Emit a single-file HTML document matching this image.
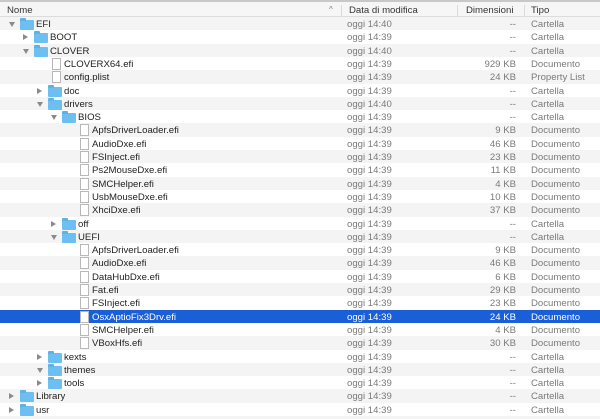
<!DOCTYPE html>
<html><head><style>
*{margin:0;padding:0;box-sizing:border-box}
body{width:600px;height:419px;overflow:hidden;background:#f4f4f4;font-family:"Liberation Sans",Arial,sans-serif;font-size:9.6px;color:#222;position:relative}
.hd{position:absolute;left:0;top:0;width:600px;height:17px;background:#f6f6f6;border-top:2px solid #c8c8c8;border-bottom:1px solid #dcdcdc}
.hd span{position:absolute;top:3px;color:#333}
.dv{position:absolute;top:3px;width:1px;height:11px;background:#dadada}
.r{position:absolute;left:0;width:600px;height:13.25px}
.r.w{background:#fff}.r.g{background:#f4f4f4}
.r.s{background:#1a5ed8;color:#fff}
.r.s .d,.r.s .z,.r.s .t{color:#fff}
.r>span{position:absolute;top:2px;white-space:nowrap;line-height:12px}
.r>div{position:absolute}
.d{left:347px;color:#7a7a7a}
.z{right:84px;color:#7a7a7a;text-align:right}
.t{left:531px;color:#7a7a7a}
.tri{top:4px;width:0;height:0}
.tr{border-left:5px solid #8a8a8a;border-top:3px solid transparent;border-bottom:3px solid transparent}
.td{border-top:5px solid #8a8a8a;border-left:3px solid transparent;border-right:3px solid transparent;top:5px}
.fo{top:3px;width:14px;height:10px;background:#6cbff0;border-radius:1px}
.fo:before{content:"";position:absolute;left:0;top:-2px;width:6px;height:3px;background:#5fb2e6;border-radius:1px 1px 0 0}
.fi{top:1px;width:9px;height:12px;background:#fff;border:1px solid #b8b8b8}
</style></head><body>
<div class="hd"><span style="left:7px">Nome</span><span style="left:329px;color:#777;font-size:8px;top:3px">^</span><div class="dv" style="left:341px"></div><span style="left:349px">Data di modifica</span><div class="dv" style="left:457px"></div><span style="left:466px">Dimensioni</span><div class="dv" style="left:524px"></div><span style="left:531px">Tipo</span></div>
<div id="rows"></div>
<script>
var R=[["EFI",0,"D","14:40","--","Cartella"],["BOOT",1,"R","14:39","--","Cartella"],["CLOVER",1,"D","14:40","--","Cartella"],["CLOVERX64.efi",2,"F","14:39","929 KB","Documento"],["config.plist",2,"F","14:39","24 KB","Property List"],["doc",2,"R","14:39","--","Cartella"],["drivers",2,"D","14:40","--","Cartella"],["BIOS",3,"D","14:39","--","Cartella"],["ApfsDriverLoader.efi",4,"F","14:39","9 KB","Documento"],["AudioDxe.efi",4,"F","14:39","46 KB","Documento"],["FSInject.efi",4,"F","14:39","23 KB","Documento"],["Ps2MouseDxe.efi",4,"F","14:39","11 KB","Documento"],["SMCHelper.efi",4,"F","14:39","4 KB","Documento"],["UsbMouseDxe.efi",4,"F","14:39","10 KB","Documento"],["XhciDxe.efi",4,"F","14:39","37 KB","Documento"],["off",3,"R","14:39","--","Cartella"],["UEFI",3,"D","14:39","--","Cartella"],["ApfsDriverLoader.efi",4,"F","14:39","9 KB","Documento"],["AudioDxe.efi",4,"F","14:39","46 KB","Documento"],["DataHubDxe.efi",4,"F","14:39","6 KB","Documento"],["Fat.efi",4,"F","14:39","29 KB","Documento"],["FSInject.efi",4,"F","14:39","23 KB","Documento"],["OsxAptioFix3Drv.efi",4,"F","14:39","24 KB","Documento"],["SMCHelper.efi",4,"F","14:39","4 KB","Documento"],["VBoxHfs.efi",4,"F","14:39","30 KB","Documento"],["kexts",2,"R","14:39","--","Cartella"],["themes",2,"D","14:39","--","Cartella"],["tools",2,"R","14:39","--","Cartella"],["Library",0,"R","14:39","--","Cartella"],["usr",0,"R","14:39","--","Cartella"]];
var h="";
R.forEach(function(r,i){
 var c=i==22?"s":(i%2?"w":"g"),l=r[1],top=17+i*13.3;
 h+='<div class="r '+c+'" style="top:'+top+'px">';
 if(r[2]=="F"){h+='<div class="fi" style="left:'+(52+(l-2)*14)+'px"></div><span style="left:'+(64+(l-2)*14)+'px">'+r[0]+'</span>';}
 else{h+='<div class="tri '+(r[2]=="D"?"td":"tr")+'" style="left:'+(9+l*14)+'px"></div><div class="fo" style="left:'+(20+l*14)+'px"></div><span style="left:'+(36+l*14)+'px">'+r[0]+'</span>';}
 h+='<span class="d">oggi '+r[3]+'</span><span class="z">'+r[4]+'</span><span class="t">'+r[5]+'</span></div>';
});
document.getElementById("rows").innerHTML=h;
</script>
</body></html>
